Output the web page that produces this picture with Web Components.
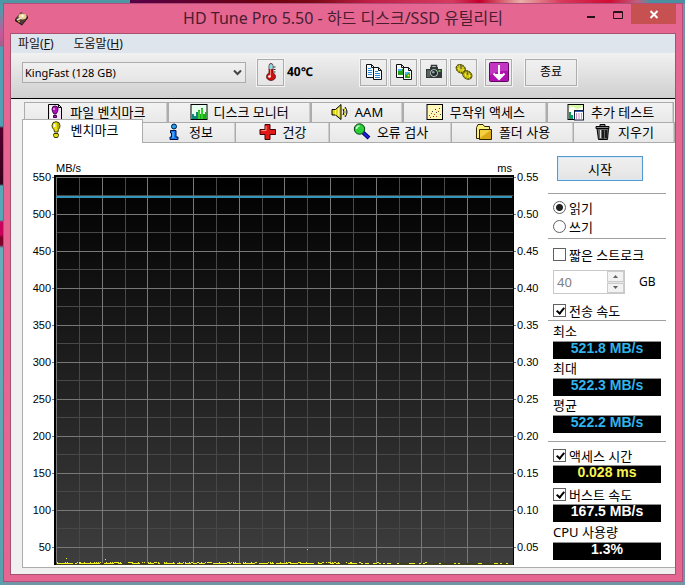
<!DOCTYPE html>
<html lang="ko">
<head>
<meta charset="utf-8">
<title>HD Tune Pro 5.50</title>
<style>
  html { height: 100%; }
  body {
    margin: 0; min-height: 100%; box-sizing: border-box; padding: 3px 2px 3px 3px;
    display: flex; flex-direction: column;
    font-family: "Noto Sans", "Noto Sans CJK KR", sans-serif; font-size: 13px; line-height: 16px; color: #000;
    background:
      linear-gradient(90deg, #4d98a4 19%, #560048 19%, #6b0010 38%, #7c0a18 46%, #c01f48 54%, #d53a60 66%, #c4002c 70%, #e8b0a8 76%, #d8385c 82%, #d00c34 89%, #c06080 93%, #4a90a0 95%) top / 100% 4px no-repeat,
      linear-gradient(#4f9aaa 10px, #c9579a 34px, #a0608c 46px, #4fa0b4 47px 126px, #54002c 128px, #35001c 184px, #55a8b8 186px 220px, #c8005c 222px 235px, #80002c 237px 245px, #66aebc 248px, #58a0ae) left / 4px 100% no-repeat,
      #7096a8;
  }
  hd-window { flex: 1; }
</style>
</head>
<body>
<hd-window caption="HD Tune Pro 5.50 - 하드 디스크/SSD 유틸리티">
  <hd-menubar></hd-menubar>
  <hd-toolbar></hd-toolbar>
  <hd-tabs>
    <hd-tab slot="back" icon="filebench" style="flex-grow:144">파일 벤치마크</hd-tab>
    <hd-tab slot="back" icon="monitor" style="flex-grow:143">디스크 모니터</hd-tab>
    <hd-tab slot="back" icon="speaker" style="flex-grow:93">AAM</hd-tab>
    <hd-tab slot="back" icon="random" style="flex-grow:144">무작위 액세스</hd-tab>
    <hd-tab slot="back" icon="extra" style="flex-grow:127">추가 테스트</hd-tab>
    <hd-tab slot="front" icon="bench" active style="flex-grow:121">벤치마크</hd-tab>
    <hd-tab slot="front" icon="info" style="flex-grow:93">정보</hd-tab>
    <hd-tab slot="front" icon="health" style="flex-grow:94">건강</hd-tab>
    <hd-tab slot="front" icon="scan" style="flex-grow:122">오류 검사</hd-tab>
    <hd-tab slot="front" icon="folder" style="flex-grow:122">폴더 사용</hd-tab>
    <hd-tab slot="front" icon="trash" style="flex-grow:101">지우기</hd-tab>
  </hd-tabs>
  <hd-benchmark>
    <hd-chart></hd-chart>
    <hd-controls slot="side"></hd-controls>
  </hd-benchmark>
</hd-window>

<script>
const ICONS = {
  app: `<path d="M2 9 8 2l7 4-6 8z" fill="#4a3a34"/><path d="M2 9l7 5v1.500L2 11zM9 14l6-8v2l-6 7.500z" fill="#1c1816"/><ellipse cx="9.500" cy="6.500" rx="4" ry="3" fill="#f0d090"/><circle cx="9.500" cy="6" r="1.200" fill="#fff"/><path d="M4 10l4-2" stroke="#e8e0d0" stroke-width="1.500"/><circle cx="6" cy="11.500" r="1" fill="#d8a040"/>`,
  thermo: `<path d="M7 3q0-2.500 2-2.500t2 2.500v7q2.500 1 2.500 3.500Q13.500 17 9 17.500 4.500 17 4.500 13.500 4.500 11 7 10z" fill="#d01010" stroke="#501010" stroke-width=".8"/><path d="M7.300 2.500q0-1.500 1.700-1.500t1.700 1.500V6H7.300z" fill="#80e0e8"/><path d="M8.500 6v7" stroke="#ff8070"/><circle cx="7.500" cy="13.500" r="1.300" fill="#fff"/><path d="M11.500 4h2M11.500 6.500h2M11.500 9h2" stroke="#333"/>`,
  copy: `<path d="M1.500 1.500h5l3 3v10h-8z" fill="#f4faff" stroke="#111"/><path d="M8.500 4.500h5l3 3v9h-8z" fill="#f4faff" stroke="#111"/><path d="M6.500 1.500v3h3M13.500 4.500v3h3" fill="none" stroke="#111"/><path d="M3 5.500h3M3 7.500h4M3 9.500h4M3 11.500h4M10 8.500h3M10 10.500h5M10 12.500h5M10 14.500h5" stroke="#2888d8"/>`,
  copyimg: `<path d="M1.500 1.500h5l3 3v10h-8z" fill="#f4faff" stroke="#111"/><path d="M3 6h5v6H3z" fill="#28a018"/><path d="M3 6h4v2H3z" fill="#48b8e8"/><path d="M8.500 4.500h5l3 3v9h-8z" fill="#f4faff" stroke="#111"/><path d="M6.500 1.500v3h3M13.500 4.500v3h3" fill="none" stroke="#111"/><path d="M10 9h5v6h-5z" fill="#28a018"/><path d="M10 9h5v2l-2-1-1 2-2-1z" fill="#48b8e8"/><circle cx="13.500" cy="12.500" r="1" fill="#f8e020"/>`,
  camera: `<path d="M1 6h4V4h8v2h4v9H1z" fill="#303838"/><path d="M6.500 4V2.500h5V4" fill="none" stroke="#303838" stroke-width="1.500"/><path d="M2 7h3v7H2z" fill="#586060"/><circle cx="9" cy="10" r="3.800" fill="#d8dcdc"/><circle cx="9" cy="10" r="3" fill="#202828"/><circle cx="8.300" cy="9.300" r="1.300" fill="#88a8a8"/><path d="M13.500 7h2v2h-2z" fill="#60c040"/>`,
  gears: `<g stroke="#4c4800" stroke-width=".8" fill="#d0c810"><ellipse cx="5.800" cy="5.800" rx="5" ry="4" transform="rotate(35 5.800 5.800)"/><ellipse cx="12.300" cy="12" rx="5" ry="4" transform="rotate(35 12.300 12)"/></g><g fill="none" stroke="#5c5600" stroke-width="1.600" stroke-dasharray="1 1.600"><ellipse cx="5.800" cy="5.800" rx="4.500" ry="3.500" transform="rotate(35 5.800 5.800)"/><ellipse cx="12.300" cy="12" rx="4.500" ry="3.500" transform="rotate(35 12.300 12)"/></g><path d="M6 2v4M12.500 8v4" stroke="#666" stroke-width="1.500"/><path d="M4 5v2M8 6v2M10.500 11v2M14.500 12v2" stroke="#f0ec50"/>`,
  save: `<rect x=".5" y=".5" width="19" height="19" rx="1" fill="#b010b0" stroke="#600860"/><path d="M1 1h18v8Q10 8 1 13z" fill="#d050d0" opacity=".6"/><path d="M10 3v13M4.500 11.500 10 17l5.500-5.500" fill="none" stroke="#fff" stroke-width="2"/><path d="M6 12h8l-4 4.500z" fill="#fff"/>`,
  filebench: `<path d="M2.500 1.500h10l3 3v12h-13z" fill="#f4e4f8" stroke="#000"/><path d="M12.500 1.500v3h3" fill="none" stroke="#000"/><path d="M4 15V4l3-1v12z" fill="#fff"/><path d="M9 3q3 0 3 3 0 2.500-2 5H8Q6 8.500 6 6q0-3 3-3z" fill="#b010b8" stroke="#400048"/><path d="M7.500 12.500h3v2h-3z" fill="#b010b8" stroke="#400048"/><path d="M8 5v2" stroke="#fff"/>`,
  bench: `<path d="M9 .7q4 0 4 4 0 2-1.700 4L11 11H7.500L7 8.700Q5 7 5 4.700q0-4 4-4z" fill="#e8e010" stroke="#383800"/><path d="M7 12.500h4l.5 2-1 2H7.500l-1-2z" fill="#e8e010" stroke="#383800"/><path d="M7.500 3v3" stroke="#fff" stroke-width="1.500"/><path d="M11 2v6" stroke="#8c8400"/>`,
  monitor: `<rect x="1" y="1.500" width="16" height="15" fill="#e8fff0" stroke="#000"/><path d="M2 16V11h2v2h2V9h2v3h2v4z" fill="#108878"/><path d="M8 16V7h2v4h1V5h2v6h2v-2h1.500v7z" fill="#18b018"/><path d="M9 16V8M12 16V6" stroke="#58f038"/>`,
  speaker: `<path d="M1 6.500h3.500L10 1.500v15L4.500 12H1z" fill="#e0d818" stroke="#000"/><path d="M4.500 7v4.500M7.500 5v8" stroke="#fff888"/><path d="M12 6q2 3 0 6M14 4q4 5 0 10" fill="none" stroke="#000"/><path d="M13 5q3 4 0 8" fill="none" stroke="#c8b800"/>`,
  random: `<rect x="1" y="1.500" width="15.500" height="15" fill="#fff8b8" stroke="#000"/><g shape-rendering="crispEdges"><path d="M3 12.500h1M5 10.500h1M4 14.500h1M8 11.500h1M12 8.500h1M10 13.500h1" stroke="#c04010"/><path d="M6 8.500h1M10 9.500h1M13 5.500h1M14 11.500h1M9 6.500h1M7 13.500h1" stroke="#404040"/></g>`,
  extra: `<rect x="1" y="1.500" width="15.500" height="15" fill="#fffff0" stroke="#000"/><path d="M2 16V9h2v3h2v4z" fill="#109868"/><path d="M2 6q3-4 6-1t8-2v-1H2z" fill="#d8f8a8"/><rect x="7.500" y="7.500" width="9" height="9.500" fill="#fff" stroke="#102040"/><path d="M8 8.500h8" stroke="#3060c0"/><path d="M9 11h1M11.500 11h1M14 11h1M9 13h1M11.500 13h1M14 13h1M9 15h1M11.500 15h1M14 15h1" stroke="#902080"/>`,
  info: `<circle cx="9" cy="3.500" r="2.500" fill="#28a0f0" stroke="#001840"/><path d="M5.500 7.500h5.500v6.500h2v2.500H5v-2.500h1.500v-4h-1z" fill="#1878f0" stroke="#001040"/><path d="M8 9v6" stroke="#70c8ff"/>`,
  health: `<path d="M6 1.500h5v5h5.500v5H11v5H6v-5H1v-5h5z" fill="#e01818" stroke="#400000"/><path d="M7 3v4.500H2.500" fill="none" stroke="#ff9080"/>`,
  scan: `<path d="M10 9.500l6 5.500" stroke="#000060" stroke-width="4"/><path d="M10 9.500l5.500 5" stroke="#1828e0" stroke-width="2"/><circle cx="6.500" cy="6" r="5.200" fill="#28d038" stroke="#084010"/><path d="M3.500 6q0-3 3-3" fill="none" stroke="#c8ffc8" stroke-width="1.500"/>`,
  folder: `<path d="M1.500 4.500l1.500-3h5l1.500 2h5v12h-13z" fill="#f8f080" stroke="#302400"/><path d="M4.500 6.500h12v10h-12z" fill="#d8a818" stroke="#302400"/><path d="M5 7h11l-11 8z" fill="#f4d040"/>`,
  trash: `<path d="M2 3.500h13v2H2zM6 1.500h5v2H6z" fill="#888" stroke="#000"/><path d="M3 5.500h11.500l-1 11h-9z" fill="#686868" stroke="#000"/><path d="M6.500 7v8" stroke="#ddd"/><path d="M9 7v8.500M12 7v8" stroke="#000" stroke-width="1.500"/>`,
  min: `<path d="M5 12h8" stroke="#2a1018" stroke-width="2"/>`,
  max: `<path d="M4.500 6.500h9v7h-9zM4 7.500h10" fill="none" stroke="#2a1018"/>`,
  close: `<path d="M5.500 6l7 7M12.500 6l-7 7" stroke="#fff" stroke-width="2"/>`
};

function define(name, html, setup) {
  const tpl = document.createElement('template');
  tpl.innerHTML = html;
  customElements.define(name, class extends HTMLElement {
    connectedCallback() {
      if (this.shadowRoot) return;
      const root = this.attachShadow({ mode: 'open' });
      root.append(tpl.content.cloneNode(true));
      if (setup) setup(this, root);
    }
  });
}

define('hd-icon', `<style>:host{display:block;flex:none;width:18px;height:18px}:host([name=save]){width:20px;height:20px}:host([name=app]){width:16px;height:16px}svg{display:block;width:100%;height:100%}</style><svg aria-hidden="true"></svg>`,
  (el, root) => {
    const svg = root.querySelector('svg'), n = el.getAttribute('name');
    const s = n === 'save' ? 20 : n === 'app' ? 16 : 18;
    svg.setAttribute('viewBox', `0 0 ${s} ${s}`);
    svg.innerHTML = ICONS[n];
  });

define('hd-window', `<style>
  :host{display:flex;flex-direction:column;box-sizing:border-box;border:1px solid #b0507a;background:#e56690;padding:0 6px 6px}
  header{display:grid;grid-template-columns:1fr auto 1fr;height:29px;color:#4a1c30}
  header > hd-icon{margin:6px 0 0 3px}
  h1{margin:0;font-size:16px;line-height:28px;font-weight:400;white-space:nowrap}
  .ctl{display:flex;justify-content:flex-end;align-items:flex-start}
  button{border:0;background:none;padding:0;width:27px;height:20px;display:grid;place-items:center}
  .close{width:45px;background:#c75050}
  main{flex:1;border:1px solid #a8506f;background:#f0f0f0;display:flex;flex-direction:column}
</style><header><hd-icon name="app"></hd-icon><h1></h1><div class="ctl"><button aria-label="최소화"><hd-icon name="min"></hd-icon></button><button aria-label="최대화"><hd-icon name="max"></hd-icon></button><button class="close" aria-label="닫기"><hd-icon name="close"></hd-icon></button></div></header><main><slot></slot></main>`,
  (el, root) => root.querySelector('h1').textContent = el.getAttribute('caption'));

define('hd-menubar', `<style>
  :host{display:flex;gap:20px;padding:0 7px;height:19px;background:#dee5ed}
  button{border:0;background:none;padding:0;font:inherit;font-size:12px;line-height:19px;color:#111}
</style><button>파일(<u>F</u>)</button><button>도움말(<u>H</u>)</button>`);

define('hd-tool', `<style>
  :host{display:block;flex:none}
  button{box-sizing:border-box;width:100%;min-width:27px;height:27px;padding:0;display:grid;place-items:center;border:1px solid #acacac;background:linear-gradient(#f0f0f0,#e5e5e5);font:inherit;font-size:12px;color:#000;outline:1px solid #f4f4f4}
</style><button><slot></slot></button>`,
  (el, root) => root.querySelector('button').setAttribute('aria-label', el.title || el.textContent));

define('hd-toolbar', `<style>
  :host{display:flex;align-items:center;height:38px;padding:0 11px 7px;background:linear-gradient(#f1f1f1,#cfcfcf);border-bottom:1px solid #000}
  .combo{position:relative;flex:0 1 224px;min-width:0;margin-right:11px}
  select{appearance:none;box-sizing:border-box;width:100%;height:21px;display:block;border:1px solid #acacac;border-radius:0;background:linear-gradient(#f0f0f0,#e5e5e5);padding:0 18px 0 2px;font:inherit;font-size:11px;line-height:19px;color:#000}
  svg{position:absolute;right:4px;top:7px;width:9px;height:7px;pointer-events:none}
  .temp{width:73px;margin-left:3px;font-weight:700;font-size:12px}
  .tools{display:flex;gap:3px}
  .save{margin-left:8px}.exit{margin-left:13px;width:52px}
</style>
<div class="combo"><select aria-label="드라이브"><option>KingFast (128 GB)</option></select><svg viewBox="0 0 9 7"><path d="M1 1.500l3.500 3.500L8 1.500" fill="none" stroke="#444" stroke-width="2"/></svg></div>
<hd-tool title="온도"><hd-icon name="thermo"></hd-icon></hd-tool><span class="temp">40℃</span>
<div class="tools"><hd-tool title="텍스트 복사"><hd-icon name="copy"></hd-icon></hd-tool><hd-tool title="화면 복사"><hd-icon name="copyimg"></hd-icon></hd-tool><hd-tool title="화면 저장"><hd-icon name="camera"></hd-icon></hd-tool><hd-tool title="옵션"><hd-icon name="gears"></hd-icon></hd-tool></div>
<hd-tool class="save" title="저장"><hd-icon name="save"></hd-icon></hd-tool><hd-tool class="exit">종료</hd-tool>`);

define('hd-tabs', `<style>
  :host{display:block;padding-top:3px}
  .row{display:flex}
  .back{padding-left:14px}
  .front{padding-left:11px;align-items:flex-end;margin-top:-2px}
</style><div role="tablist"><div class="row back"><slot name="back"></slot></div><div class="row front"><slot name="front"></slot></div></div>`);

define('hd-tab', `<style>
  :host{display:block;flex:1 1 0;min-width:0}
  button{box-sizing:border-box;width:100%;height:21px;padding:0 0 2px;display:flex;align-items:center;justify-content:center;gap:6px;border:1px solid #acacac;border-width:1px 1px 1px 0;box-shadow:inset -1px 0 #ccc;background:linear-gradient(#f2f2f2,#e8e8e8);font:inherit;color:#000;white-space:nowrap}
  :host([slot=back]) button{border-bottom:0;border-left-width:1px;margin-left:-1px}
  :host([active]) button{position:relative;height:24px;background:#fff;border-width:1px 1px 0;box-shadow:none;padding-bottom:4px;margin-top:-2px}
</style><button role="tab"><hd-icon></hd-icon><slot></slot></button>`,
  (el, root) => {
    root.querySelector('hd-icon').remove();
    const i = document.createElement('hd-icon');
    i.setAttribute('name', el.getAttribute('icon'));
    root.querySelector('button').prepend(i);
    root.querySelector('button').setAttribute('aria-selected', el.hasAttribute('active'));
  });

define('hd-benchmark', `<style>
  :host{display:flex;margin:0 0 6px 11px;padding:0 9px 1px 0;gap:5px;border:1px solid #acacac;border-width:0 0 1px 1px;background:#fff}
  .chart{flex:1;min-width:0}.side{width:118px}
</style><div class="chart"><slot></slot></div><div class="side"><slot name="side"></slot></div>`);

define('hd-chart', `<style>
  :host{display:grid;grid-template:32px auto / 31px 1fr 29px;font:11px/13px "Liberation Sans",sans-serif}
  ol{list-style:none;margin:0;padding:16px 0 0;grid-row:1 / 3}
  li{height:37px;line-height:37px;position:relative}
  .l{grid-column:1;text-align:right}.l li{padding-right:3px}
  .r{grid-column:3}.r li{padding-left:3px}
  li::after{content:"";position:absolute;top:18px;width:2px;height:1px;background:#777}
  .l li::after{right:0}.r li::after{left:0}
  .u{grid-area:1/2;display:flex;justify-content:space-between;align-items:flex-end;padding:0 2px 0 2px}
  svg{grid-area:2/2;display:block;width:100%;height:390px;background:#000}
</style><ol class="l"></ol><div class="u"><span>MB/s</span><span>ms</span></div><svg role="img" aria-label="벤치마크 그래프" shape-rendering="crispEdges"></svg><ol class="r"></ol>`,
  (el, root) => {
    for (let v = 11; v > 0; v--) {
      root.querySelector('.l').insertAdjacentHTML('beforeend', `<li>${v * 50}</li>`);
      root.querySelector('.r').insertAdjacentHTML('beforeend', `<li>${(v * 0.05).toFixed(2)}</li>`);
    }
    let s = `<defs><linearGradient id="g" x2="0" y2="1"><stop stop-color="#000"/><stop offset="1" stop-color="#3e3e3e"/></linearGradient></defs><rect x="2" y="2" width="99.3%" height="388" fill="url(#g)"/>`;
    const vx = k => 0.45 + k * 4.965;
    for (const major of [false, true]) {
      const c = major ? '#787878' : '#484848';
      for (let k = major ? 0 : 1; k <= 20; k += 2)
        s += `<rect x="${vx(k)}%" y="2" width="1" height="388" fill="${c}"/>`;
      for (let k = major ? 0 : 1; k <= 20; k += 2)
        s += `<rect x="2" y="${2 + Math.floor(k * 18.5)}" width="99.4%" height="1" fill="${c}"/>`;
    }
    s += `<rect x="2" y="21" width="99.2%" height="2" fill="#3394bc"/>`;
    s += `<rect x="2" y="388" width="99%" height="2" fill="#3e3e20"/>`;
    let seed = 7;
    const rnd = () => (seed = (seed * 16807) % 2147483647) / 2147483647;
    for (let i = 0; i < 228; i++) {
      const p = i < 130 ? 0.85 : i < 185 ? 0.6 : 0.3;
      if (rnd() < p) s += `<rect x="${0.6 + i * 0.43}%" y="${rnd() < 0.12 ? 387 : 388}" width="2" height="1" fill="#f4f01c"/>`;
      if (i < 150 && rnd() < 0.5) s += `<rect x="${0.6 + i * 0.43}%" y="387" width="1" height="1" fill="#f4f01c"/>`;
    }
    s += `<rect x="2.600%" y="383" width="1" height="1" fill="#f4f01c"/><rect x="11%" y="384" width="1" height="1" fill="#f4f01c"/><rect x="55%" y="374" width="1" height="1" fill="#c8c430"/>`;
    s += `<rect x="99.8%" y="0" width="1" height="390" fill="#000"/>`;
    root.querySelector('svg').innerHTML = s;
  });

define('hd-choice', `<style>
  :host{display:block}
  label{display:flex;align-items:center;gap:3px;height:19px;white-space:nowrap}
  input{appearance:none;flex:none;box-sizing:border-box;width:13px;height:13px;margin:0;border:1px solid #606060;background:#fff}
  input[type=radio]{border-radius:50%}
  input[type=radio]:checked{background:radial-gradient(circle,#202020 3px,#fff 4px)}
  input[type=checkbox]:checked{position:relative}
  input[type=checkbox]:checked::after{content:"";position:absolute;left:4px;top:1px;width:3px;height:6px;border:solid #000;border-width:0 2px 2px 0;transform:rotate(40deg)}
</style><label><input><span><slot></slot></span></label>`,
  (el, root) => {
    const i = root.querySelector('input');
    i.type = el.getAttribute('type') || 'checkbox';
    i.checked = el.hasAttribute('checked');
  });

define('hd-readout', `<style>
  :host{display:block;box-sizing:border-box;height:18px;background:#000;border-top:1px solid #909090;text-align:center;font:700 14px/13px "Liberation Sans",sans-serif;color:#fff}
</style><slot></slot>`);

define('hd-controls', `<style>
  :host{display:flex;flex-direction:column}
  .in{padding:0 5px;display:flex;flex-direction:column}
  button.go{margin:13px 23px 12px 9px;height:25px;padding:0;border:1px solid #569bd0;box-shadow:inset 0 0 0 1px #d4e8f8;background:linear-gradient(#f0f0f0,#e4e4e4);font:inherit;color:#000}
  hr{margin:0;border:0;height:1px;background:#a0a0a0;width:100%}
  .radios{padding-top:4px;padding-bottom:2px}
  .stroke{padding-top:6px;gap:6px;padding-bottom:7px}
  .size{display:flex;align-items:center;gap:14px;height:24px;font-size:12px}
  .spin{display:flex;box-sizing:border-box;width:72px;height:24px;border:1px solid #c8c8c8}
  .spin input{min-width:0;flex:1;border:0;padding:0 0 0 3px;background:#fff;font:inherit;font-size:13px;color:#808080}
  .ud{display:flex;flex-direction:column;width:17px;background:#e4e4e4;gap:1px}
  .ud button{flex:1;margin:0;padding:0;border:1px solid #ccc;background:#f2f2f2;display:grid;place-items:center}
  .ud svg{display:block;width:5px;height:3px}
  .label{line-height:20px;height:20px}
  .cyan{padding-bottom:8px}
  .cyan hd-readout{color:#30b4ec}
  .cyan hd-readout + .label{margin-top:-1px}
  .timing{padding-top:4px}
  .yellow{color:#f8f450;margin-bottom:2px}
</style>
<button class="go">시작</button><hr>
<div class="in radios"><hd-choice type="radio" checked>읽기</hd-choice><hd-choice type="radio">쓰기</hd-choice></div><hr>
<div class="in stroke"><hd-choice>짧은 스트로크</hd-choice>
<div class="size"><div class="spin"><input aria-label="크기" value="40" disabled><div class="ud"><button disabled aria-label="증가"><svg viewBox="0 0 5 3"><path d="M0 3 2.500 0 5 3z" fill="#606060"/></svg></button><button disabled aria-label="감소"><svg viewBox="0 0 5 3"><path d="M0 0 2.500 3 5 0z" fill="#606060"/></svg></button></div></div><span>GB</span></div></div>
<div class="in"><hd-choice checked>전송 속도</hd-choice></div><hr>
<div class="in cyan"><span class="label">최소</span><hd-readout>521.8 MB/s</hd-readout><span class="label">최대</span><hd-readout>522.3 MB/s</hd-readout><span class="label">평균</span><hd-readout>522.2 MB/s</hd-readout></div><hr>
<div class="in timing"><hd-choice checked>액세스 시간</hd-choice><hd-readout class="yellow">0.028 ms</hd-readout><hd-choice checked>버스트 속도</hd-choice><hd-readout>167.5 MB/s</hd-readout><span class="label">CPU 사용량</span><hd-readout>1.3%</hd-readout></div>`);
</script>
</body>
</html>
